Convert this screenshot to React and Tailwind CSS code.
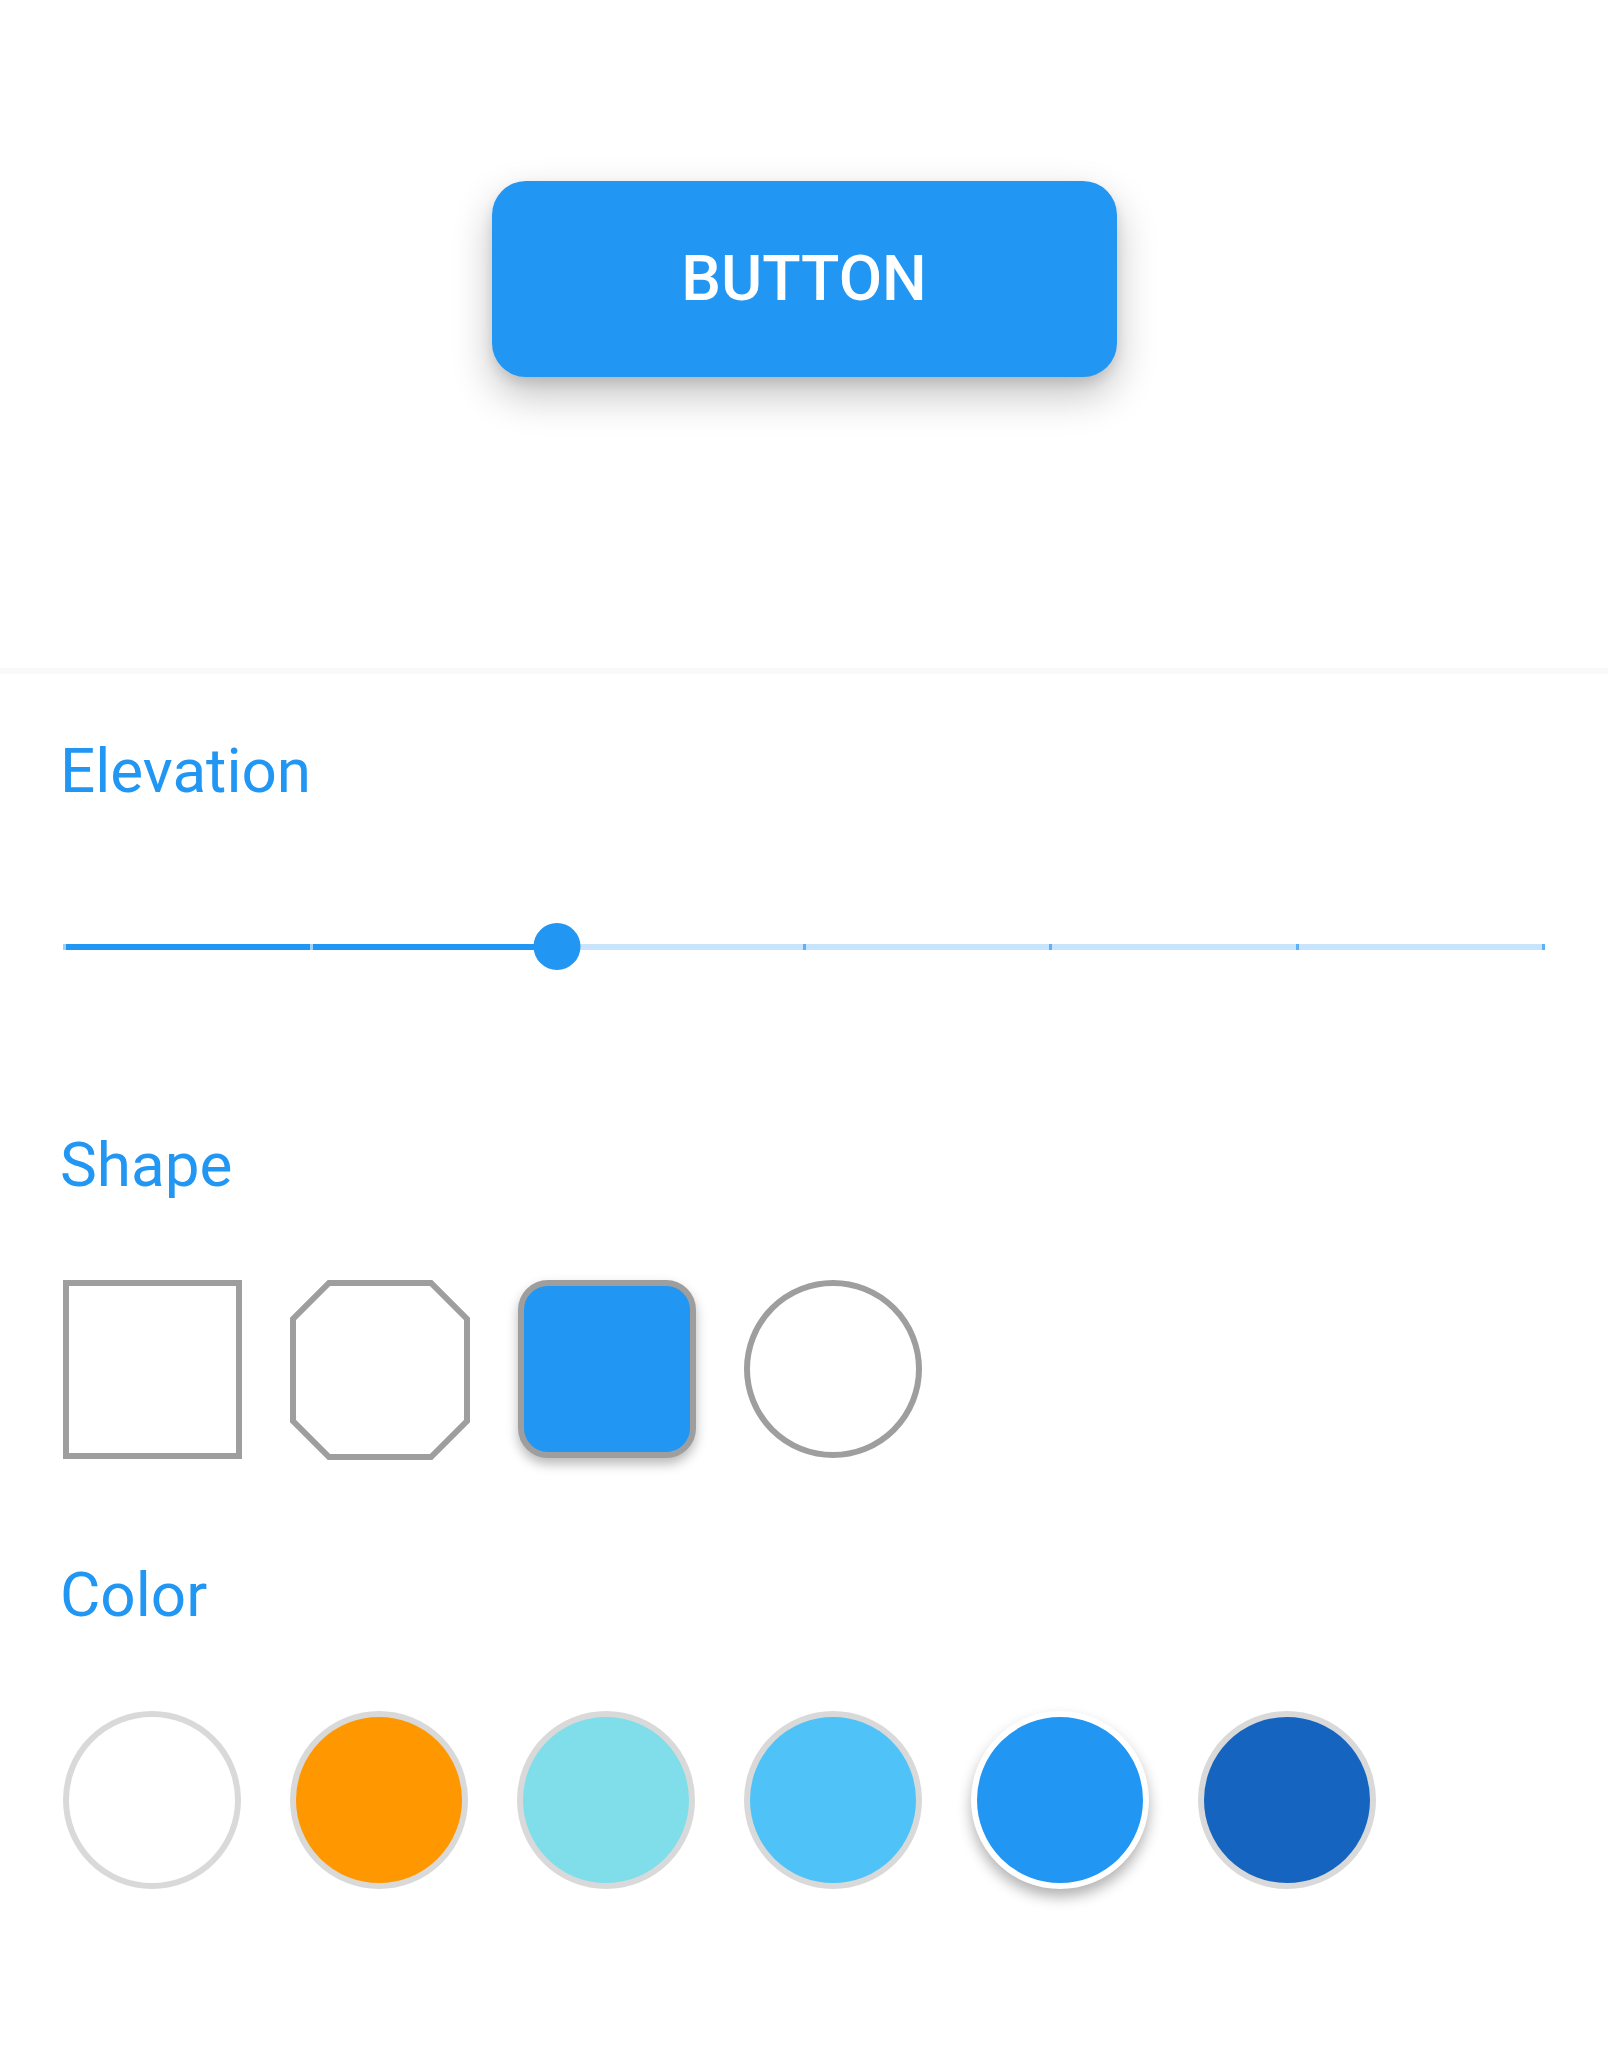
import React, { useState } from 'react';

const STEPS = [0, 1, 2, 3, 4, 5, 6];

const COLORS = [
  { id: 'white', fill: 'bg-white' },
  { id: 'orange', fill: 'bg-[#ff9800]' },
  { id: 'cyan', fill: 'bg-[#80deea]' },
  { id: 'lightBlue', fill: 'bg-[#4fc3f7]' },
  { id: 'blue', fill: 'bg-[#2196f3]' },
  { id: 'darkBlue', fill: 'bg-[#1565c0]' },
];

const Label = ({ children, className = '' }) => (
  <h2 className={`-ml-[3px] text-[62px] leading-none font-normal text-[#2196f3] ${className}`}>{children}</h2>
);

const Octagon = () => (
  <svg viewBox="0 0 180 180" className="h-full w-full">
    <polygon
      points="39,3 141,3 177,39 177,141 141,177 39,177 3,141 3,39"
      fill="white"
      stroke="#9e9e9e"
      strokeWidth="6"
    />
  </svg>
);

const App = () => {
  const [elevation, setElevation] = useState(2);
  const [shape, setShape] = useState('rounded');
  const [color, setColor] = useState('blue');

  return (
    <div className="min-h-[2046px] w-full bg-white font-['Roboto','Liberation_Sans',sans-serif]">
      {/* Preview */}
      <div className="flex h-[668px] justify-center pt-[181px]">
        <button className="flex h-[196px] w-[625px] items-center justify-center rounded-[34px] bg-[#2196f3] text-[63px] font-medium text-white shadow-[0_18px_40px_rgba(0,0,0,0.24),0_6px_12px_rgba(0,0,0,0.1)]">
          BUTTON
        </button>
      </div>

      <div className="h-[6px] bg-[#f9f9f9]" />

      <div className="px-[63px]">
        {/* Elevation */}
        <Label className="mt-[66px]">Elevation</Label>
        <div className="relative mt-[121px] flex h-[47px] items-center">
          <div className="relative h-[6px] w-full bg-[#c8e4fc]">
            <div className="h-full w-1/3 bg-[#2196f3]" />
            <div className="absolute inset-0 flex justify-between">
              {STEPS.map((s) => (
                <span
                  key={s}
                  onClick={() => setElevation(s)}
                  className={s <= elevation ? 'h-full w-[3px] bg-[#9fd0f9]' : 'h-full w-[3px] bg-[#5fb0f5]'}
                />
              ))}
            </div>
          </div>
          <div className="absolute left-1/3 top-0 h-[47px] w-[47px] -translate-x-1/2 rounded-full bg-[#2196f3]" />
        </div>

        {/* Shape */}
        <Label className="mt-[164px]">Shape</Label>
        <div className="mt-[84px] flex gap-[48px]">
          <button onClick={() => setShape('square')} className="h-[179px] w-[179px] border-[6px] border-[#9e9e9e] bg-white" />
          <button onClick={() => setShape('cut')} className="h-[180px] w-[180px]">
            <Octagon />
          </button>
          <button
            onClick={() => setShape('rounded')}
            className={shape === 'rounded'
              ? 'h-[178px] w-[178px] rounded-[30px] border-[6px] border-[#9e9e9e] bg-[#2196f3] shadow-[0_6px_12px_rgba(0,0,0,0.28)]'
              : 'h-[178px] w-[178px] rounded-[30px] border-[6px] border-[#9e9e9e] bg-white'}
          />
          <button onClick={() => setShape('circle')} className="h-[178px] w-[178px] rounded-full border-[6px] border-[#9e9e9e] bg-white" />
        </div>

        {/* Color */}
        <Label className="mt-[104px]">Color</Label>
        <div className="mt-[85px] flex gap-[49px]">
          {COLORS.map((c) => (
            <button
              key={c.id}
              onClick={() => setColor(c.id)}
              className={color === c.id
                ? `h-[178px] w-[178px] rounded-full border-[6px] border-white ${c.fill} shadow-[0_8px_14px_rgba(0,0,0,0.3)]`
                : `h-[178px] w-[178px] rounded-full border-[6px] border-[#d9d9d9] ${c.fill}`}
            />
          ))}
        </div>
      </div>
    </div>
  );
};

export default App;
